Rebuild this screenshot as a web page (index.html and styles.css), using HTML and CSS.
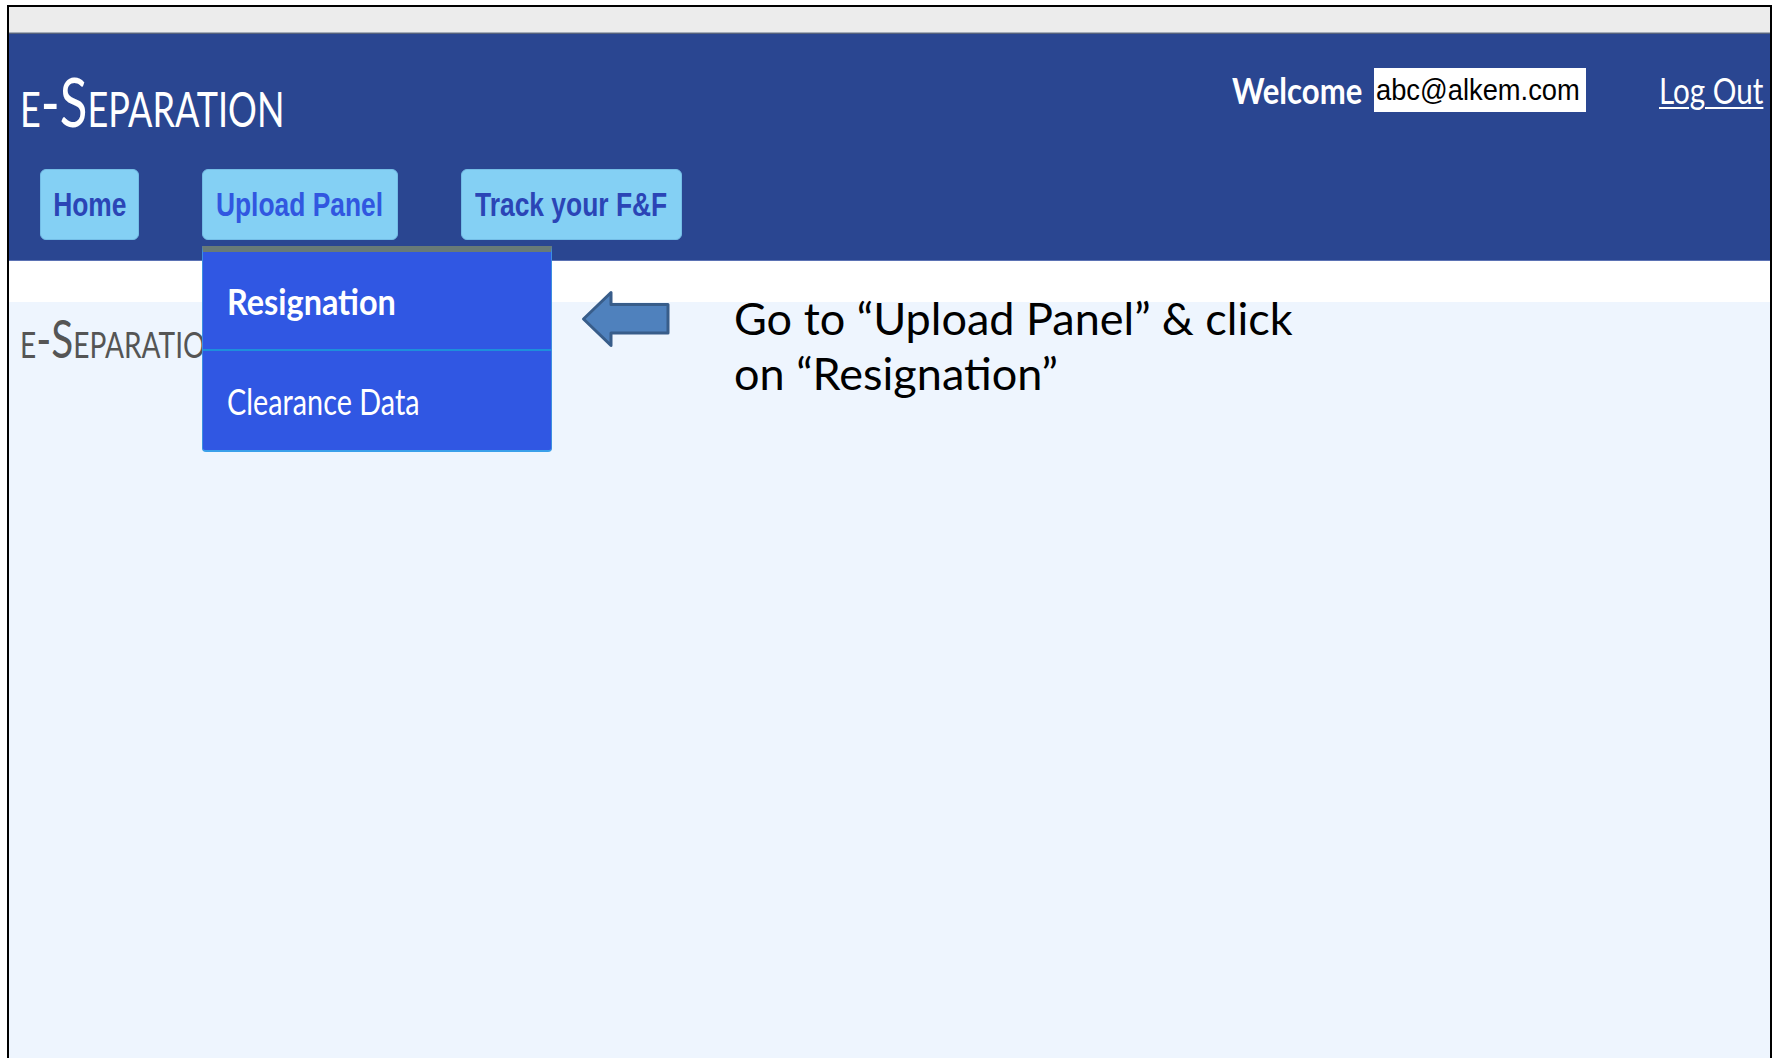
FILE: index.html
```html
<!DOCTYPE html>
<html lang="en">
<head>
<meta charset="utf-8">
<title>e-Separation</title>
<link rel="stylesheet" href="styles.css">
</head>
<body>
<div class="frame">
  <div class="topbar"></div>

  <header class="masthead">
    <div class="brand-row">
      <div class="brand"><span class="brand-text">e-Separation</span></div>
      <div class="user">
        <span class="welcome"><span class="sq">Welcome</span></span>
        <span class="email"><span class="sq">abc@alkem.com</span></span>
        <a class="logout" href="#"><span class="sq">Log Out</span></a>
      </div>
    </div>

    <nav class="nav">
      <a class="nav-btn nav-home" href="#"><span class="sq">Home</span></a>
      <div class="nav-item">
        <a class="nav-btn nav-upload" href="#"><span class="sq">Upload Panel</span></a>
        <ul class="dropdown">
          <li class="dd-item dd-active"><span class="sq">Resignation</span></li>
          <li class="dd-item dd-plain"><span class="sq">Clearance Data</span></li>
        </ul>
      </div>
      <a class="nav-btn nav-track" href="#"><span class="sq">Track your F&amp;F</span></a>
    </nav>
  </header>

  <div class="strip"></div>

  <main class="content">
    <h1 class="page-title"><span class="title-text">e-Separation</span></h1>
  </main>

  <div class="callout">
    <svg class="callout-arrow" width="90" height="58" viewBox="0 0 90 58">
      <path d="M2.5 29 L30 2.5 L30 14.5 L87 14.5 L87 43 L30 43 L30 55.5 Z" fill="#4f81bd" stroke="#385d8a" stroke-width="3" stroke-linejoin="round"/>
    </svg>
    <p class="callout-text">Go to “Upload Panel” &amp; click<br>on “Resignation”</p>
  </div>
</div>
</body>
</html>
```

FILE: styles.css
```css
* { box-sizing: border-box; }

html, body {
  margin: 0;
  padding: 0;
  background: #ffffff;
}

body {
  font-family: "Lato", "Open Sans", sans-serif;
  overflow: hidden;
}

/* squeezed text run (the UI uses a tall, narrow face) */
.sq {
  display: inline-block;
  white-space: nowrap;
}

.frame {
  position: relative;
  margin: 5px 0 0 7px;
  width: 1765px;
  height: 1060px;
  border: 2px solid #000;
  border-bottom: none;
  display: flex;
  flex-direction: column;
}

.topbar {
  height: 26px;
  background: #ececec;
  border-bottom: 1px solid #a4acb8;
  flex: none;
}

/* ---------- header ---------- */
.masthead {
  flex: none;
  height: 228px;
  background: #2a4691;
  border-top: 1px solid #56627c;
  border-bottom: 1px solid #5b72b4;
  padding: 0 8px 0 11px;
}

.brand-row {
  display: flex;
  justify-content: space-between;
  align-items: flex-start;
}

.brand {
  margin-top: 33px;
  font-size: 68px;
  line-height: 68px;
  height: 68px;
  color: #ffffff;
  font-variant: small-caps;
  white-space: nowrap;
}

.brand-text {
  display: inline-block;
  transform: scaleX(0.75);
  transform-origin: left center;
}

.user {
  margin-top: 34px;
  display: flex;
  align-items: center;
  height: 44px;
}

.welcome {
  width: 130px;
  margin-right: 12px;
  color: #ffffff;
  font-weight: 700;
  font-size: 37px;
  line-height: 44px;
}
.welcome .sq { transform: scaleX(0.84); transform-origin: left center; }

.email {
  width: 212px;
  height: 44px;
  background: #ffffff;
  color: #000;
  font-family: "Liberation Sans", Arial, sans-serif;
  font-size: 30px;
  line-height: 44px;
  padding-left: 2px;
  overflow: hidden;
}
.email .sq { transform: scaleX(0.91); transform-origin: left center; }

.logout {
  width: 103px;
  margin-left: 73px;
  color: #ffffff;
  font-size: 37px;
  line-height: 44px;
  text-decoration: none;
}
.logout .sq {
  transform: scaleX(0.8);
  transform-origin: left center;
  text-decoration: underline;
  text-decoration-thickness: 2px;
  text-underline-offset: 3px;
}

/* ---------- navigation ---------- */
.nav {
  display: flex;
  gap: 63px;
  margin-top: 34px;
  padding-left: 20px;
}

.nav-item {
  position: relative;
}

.nav-btn {
  display: flex;
  align-items: center;
  justify-content: center;
  height: 71px;
  background: #84d0f4;
  border: 1px solid #74bde6;
  border-radius: 6px;
  font-family: "Liberation Sans", Arial, sans-serif;
  font-weight: 700;
  font-size: 33px;
  color: #2b45b6;
  text-decoration: none;
}
.nav-btn .sq { transform: scaleX(0.8); }

.nav-home { width: 99px; }
.nav-upload { width: 196px; color: #3157e0; }
.nav-track { width: 221px; }

.dropdown {
  position: absolute;
  z-index: 5;
  top: 77px;
  left: 0;
  width: 350px;
  margin: 0;
  padding: 0;
  list-style: none;
  background: #3057e3;
  border-top: 6px solid #687a77;
  border-left: 1px solid #3c8fe0;
  border-right: 1px solid #3c8fe0;
  border-bottom: 2px solid #3aa0ea;
  border-radius: 0 0 4px 4px;
}

.dd-item {
  height: 99px;
  display: flex;
  align-items: center;
  padding-left: 24px;
  color: #ffffff;
  font-size: 36px;
}
.dd-item .sq { transform-origin: left center; }

.dd-active {
  font-weight: 700;
  border-bottom: 2px solid #1d8fdc;
}
.dd-active .sq { transform: scaleX(0.9); }
.dd-plain .sq { transform: scaleX(0.8); }

/* ---------- body ---------- */
.strip {
  flex: none;
  height: 41px;
  background: #ffffff;
}

.content {
  flex: 1;
  background: #eef5fe;
  padding: 0 0 0 11px;
}

.page-title {
  margin: 10px 0 0 0;
  font-weight: 400;
  font-size: 52px;
  line-height: 52px;
  color: #555555;
  font-variant: small-caps;
  white-space: nowrap;
}

.title-text {
  display: inline-block;
  transform: scaleX(0.78);
  transform-origin: left center;
}

/* ---------- annotation ---------- */
.callout {
  position: absolute;
  left: 572px;
  top: 283px;
  display: flex;
  align-items: flex-start;
  gap: 63px;
}

.callout-arrow {
  display: block;
  flex: none;
}

.callout-text {
  margin: 1px 0 0 0;
  font-size: 45px;
  line-height: 55px;
  color: #000000;
  white-space: nowrap;
}
```
